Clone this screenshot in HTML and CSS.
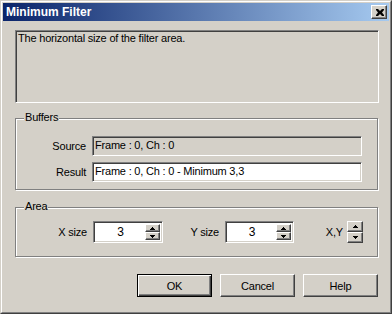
FILE: index.html
```html
<!DOCTYPE html>
<html>
<head>
<meta charset="utf-8">
<link rel="stylesheet" href="styles.css">
</head>
<body>
<div class="window">
  <div class="frame">
    <div class="titlebar">
      <span class="title">Minimum Filter</span>
      <div class="closebtn">
        <svg width="8" height="7" viewBox="0 0 8 7"><path d="M0 0h2l2 2 2-2h2v1l-2 2.5 2 2.5v1h-2l-2-2-2 2h-2v-1l2-2.5-2-2.5z" fill="#000"/></svg>
      </div>
    </div>
    <div class="content">
      <div class="desc sunken">The horizontal size of the filter area.</div>

      <div class="group buffers">
        <span class="legend">Buffers</span>
        <div class="bufgrid">
          <span class="lbl">Source</span>
          <div class="field sunken readonly">Frame : 0, Ch : 0</div>
          <span class="lbl">Result</span>
          <div class="field sunken">Frame : 0, Ch : 0 - Minimum 3,3</div>
        </div>
      </div>

      <div class="group area">
        <span class="legend">Area</span>
        <div class="arearow">
          <span class="lbl lx">X size</span>
          <div class="spinfield sunken sx">
            <span class="val">3</span>
            <div class="spins">
              <div class="spin"><svg width="5" height="3" viewBox="0 0 5 3"><path d="M2 0h1v1h1v1h1v1h-5v-1h1v-1h1z" fill="#000"/></svg></div>
              <div class="spin"><svg width="5" height="3" viewBox="0 0 5 3"><path d="M0 0h5v1h-1v1h-1v1h-1v-1h-1v-1h-1z" fill="#000"/></svg></div>
            </div>
          </div>
          <span class="lbl ly">Y size</span>
          <div class="spinfield sunken sy">
            <span class="val">3</span>
            <div class="spins">
              <div class="spin"><svg width="5" height="3" viewBox="0 0 5 3"><path d="M2 0h1v1h1v1h1v1h-5v-1h1v-1h1z" fill="#000"/></svg></div>
              <div class="spin"><svg width="5" height="3" viewBox="0 0 5 3"><path d="M0 0h5v1h-1v1h-1v1h-1v-1h-1v-1h-1z" fill="#000"/></svg></div>
            </div>
          </div>
          <span class="lbl lxy">X,Y</span>
          <div class="spins standalone">
            <div class="spin"><svg width="5" height="3" viewBox="0 0 5 3"><path d="M2 0h1v1h1v1h1v1h-5v-1h1v-1h1z" fill="#000"/></svg></div>
            <div class="spin"><svg width="5" height="3" viewBox="0 0 5 3"><path d="M0 0h5v1h-1v1h-1v1h-1v-1h-1v-1h-1z" fill="#000"/></svg></div>
          </div>
        </div>
      </div>

      <div class="buttons">
        <div class="btn default">OK</div>
        <div class="btn">Cancel</div>
        <div class="btn">Help</div>
      </div>
    </div>
  </div>
</div>
</body>
</html>
```
FILE: styles.css
```css
* { box-sizing: border-box; }
html, body { margin: 0; padding: 0; }
body {
  background: #d4d0c8;
  font-family: "Liberation Sans", Arial, sans-serif;
  font-size: 11px;
  letter-spacing: -0.2px;
  color: #000;
}
.window {
  width: 392px;
  height: 314px;
  border: 1px solid;
  border-color: #d4d0c8 #404040 #404040 #d4d0c8;
}
.frame {
  width: 100%;
  height: 100%;
  border: 1px solid;
  border-color: #fff #808080 #808080 #fff;
  padding: 1px;
  display: flex;
  flex-direction: column;
}
.titlebar {
  height: 18px;
  background: linear-gradient(to right, #0a246a, #a6caf0);
  display: flex;
  align-items: center;
  justify-content: space-between;
  padding: 0 2px 0 3px;
}
.title {
  color: #fff;
  font-weight: bold;
  font-size: 12px;
  letter-spacing: 0;
  line-height: 14px;
}
.closebtn {
  width: 16px;
  height: 14px;
  background: #d4d0c8;
  border: 1px solid;
  border-color: #fff #404040 #404040 #fff;
  box-shadow: inset -1px -1px #808080;
  display: flex;
  align-items: center;
  justify-content: center;
  padding-left: 1px;
}
.closebtn svg { display: block; }
.content {
  padding: 9px 10px 0 12px;
  display: flex;
  flex-direction: column;
}
.sunken {
  border: 1px solid;
  border-color: #808080 #fff #fff #808080;
  box-shadow: inset 1px 1px #404040, inset -1px -1px #d4d0c8;
}
.desc {
  width: 364px;
  height: 73px;
  padding: 1px 2px;
  line-height: 13px;
}
.group {
  position: relative;
  width: 363px;
  border: 1px solid #808080;
  box-shadow: inset 1px 1px #fff, 1px 1px #fff;
}
.legend {
  position: absolute;
  top: -8px;
  left: 8px;
  background: #d4d0c8;
  padding: 0 1px;
  line-height: 13px;
}
.buffers {
  margin-top: 15px;
  height: 72px;
  padding-top: 17px;
}
.bufgrid {
  display: grid;
  grid-template-columns: 70px 270px;
  column-gap: 6px;
  row-gap: 6px;
  align-items: center;
}
.lbl {
  text-align: right;
  line-height: 13px;
}
.field {
  height: 20px;
  background: #fff;
  padding: 0 2px;
  line-height: 17px;
  white-space: nowrap;
}
.field.readonly { background: #d4d0c8; }
.area {
  margin-top: 17px;
  height: 50px;
  padding-top: 13px;
}
.arearow {
  display: flex;
  align-items: center;
}
.lx { width: 71px; margin-right: 6px; }
.ly { width: 56px; margin-right: 6px; }
.lxy { width: 49px; margin-right: 4px; }
.spinfield {
  height: 22px;
  background: #fff;
  display: flex;
  padding: 2px 2px 2px 2px;
}
.sx { width: 70px; }
.sy { width: 69px; }
.val {
  flex: 1;
  text-align: center;
  line-height: 17px;
  font-size: 12px;
}
.spins {
  width: 15px;
  display: flex;
  flex-direction: column;
}
.spins.standalone { width: 16px; height: 22px; }
.spin {
  flex: 1;
  background: #d4d0c8;
  border: 1px solid;
  border-color: #fff #404040 #404040 #fff;
  box-shadow: inset -1px -1px #808080;
  display: flex;
  align-items: center;
  justify-content: center;
}
.spin svg { display: block; }
.buttons {
  margin-top: 17px;
  display: flex;
  justify-content: flex-end;
  gap: 8px;
  padding-right: 1px;
}
.btn {
  width: 75px;
  height: 23px;
  border: 1px solid;
  border-color: #fff #404040 #404040 #fff;
  box-shadow: inset -1px -1px #808080;
  display: flex;
  align-items: center;
  justify-content: center;
  font-size: 11px;
}
.btn.default {
  border: 1px solid #000;
  box-shadow: inset 1px 1px #fff, inset -1px -1px #404040, inset -2px -2px #808080;
}
```
